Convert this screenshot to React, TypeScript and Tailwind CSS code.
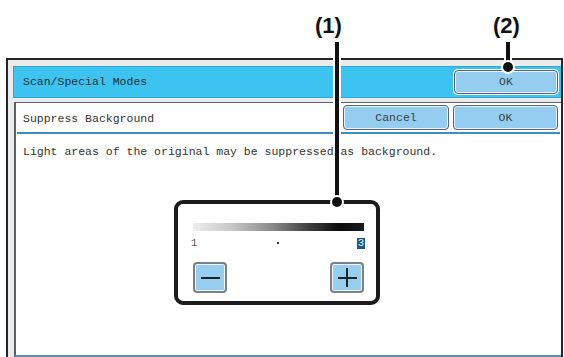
import React from "react";

const mono = "font-['Liberation_Mono','DejaVu_Sans_Mono',monospace]";

function PanelButton({ label, className = "" }: { label: string; className?: string }) {
  return (
    <div
      className={`flex items-center justify-center rounded-[4px] border border-[#5f6468] bg-[#94cdef] text-[11.5px] text-[#3a3f44] shadow-[0_0_0_1px_#ffffff,inset_0_0_0_1px_#e4f2fb] ${className}`}
    >
      {label}
    </div>
  );
}

function StepButton({ plus }: { plus?: boolean }) {
  return (
    <div className="relative flex h-[31px] w-[34px] items-center justify-center rounded-[4px] border-2 border-[#7d8185] bg-[#98cff0] shadow-[inset_0_0_0_1px_#eaf6fd]">
      <div className="h-[2px] w-[19px] bg-[#1e2326]" />
      {plus && <div className="absolute h-[19px] w-[2px] bg-[#1e2326]" />}
    </div>
  );
}

export default function App() {
  return (
    <div className={`relative h-[357px] w-[564px] overflow-hidden bg-white ${mono} text-[11.5px] text-[#333]`}>
      {/* Screen frame */}
      <div className="h-full pl-[6px] pr-[1px] pt-[58px]">
        <div className="flex h-full flex-col border-2 border-b-0 border-[#222426] border-r-[#1d2a3a] bg-[#ebebeb] pl-[5px] pt-[6px]">
          {/* Title bar */}
          <div className="flex h-[32px] items-center justify-between border-y border-l border-[#2aa6d8] bg-[#3cc3ef] pl-[9px] pr-[3px]">
            <span className="text-[#263038]">Scan/Special Modes</span>
            <PanelButton label="OK" className="h-[24px] w-[104px]" />
          </div>

          {/* Content panel */}
          <div className="ml-[1px] mt-[4px] flex flex-1 flex-col border-b-2 border-l-2 border-t border-[#5d6063] border-b-[#5b8fb3] bg-white">
            <div className="mx-[1px] flex items-center justify-between border-b-2 border-[#3d8dc0] pb-[2px] pl-[6px] pr-[2px] pt-[2px]">
              <span className="pt-[3px]">Suppress Background</span>
              <div className="flex gap-[4px]">
                <PanelButton label="Cancel" className="h-[25px] w-[106px]" />
                <PanelButton label="OK" className="h-[25px] w-[105px]" />
              </div>
            </div>

            <p className="pl-[7px] pt-[11px] leading-[14px]">
              Light areas of the original may be suppressed as background.
            </p>

            {/* Exposure slider */}
            <div className="ml-[158px] mt-[41px] flex h-[105px] w-[206px] flex-col rounded-[9px] border-4 border-[#1c1c1c] pl-[15px] pr-[12px] pt-[19px]">
              <div className="h-[8px] w-[171px] bg-[linear-gradient(to_right,#eeeeee,#c8c8c8_22%,#8a8a8a_46%,#3e3e3e_68%,#0b0b0b_86%,#1c1c1c)]" />
              <div className="relative mt-[7px] flex h-[11px] w-[172px] items-center justify-between text-[10.5px] leading-[11px]">
                <span className="-ml-[2px] text-[#555]">1</span>
                <span className="absolute left-[84px] top-[4px] h-[2px] w-[2px] bg-[#333]" />
                <span className="bg-[#1b5a86] px-[1px] text-[#e8f3fb]">3</span>
              </div>
              <div className="mt-[13px] flex w-[171px] justify-between">
                <StepButton />
                <StepButton plus />
              </div>
            </div>
          </div>
        </div>
      </div>

      {/* Callouts */}
      <div className="absolute left-[315px] top-[13px] font-['Liberation_Sans',Arial,sans-serif] text-[22px] font-bold leading-[26px] text-[#111]">
        (1)
      </div>
      <div className="absolute left-[493px] top-[13px] font-['Liberation_Sans',Arial,sans-serif] text-[22px] font-bold leading-[26px] text-[#111]">
        (2)
      </div>
      <div className="absolute left-[335px] top-[42px] h-[160px] w-[4px] bg-[#111] shadow-[0_0_0_2px_#ffffff]" />
      <div className="absolute left-[332px] top-[197px] h-[10px] w-[10px] rounded-full bg-[#111] shadow-[0_0_0_2px_#ffffff]" />
      <div className="absolute left-[506px] top-[42px] h-[25px] w-[4px] bg-[#111] shadow-[0_0_0_2px_#ffffff]" />
      <div className="absolute left-[503px] top-[62px] h-[10px] w-[10px] rounded-full bg-[#111] shadow-[0_0_0_2px_#ffffff]" />
    </div>
  );
}
